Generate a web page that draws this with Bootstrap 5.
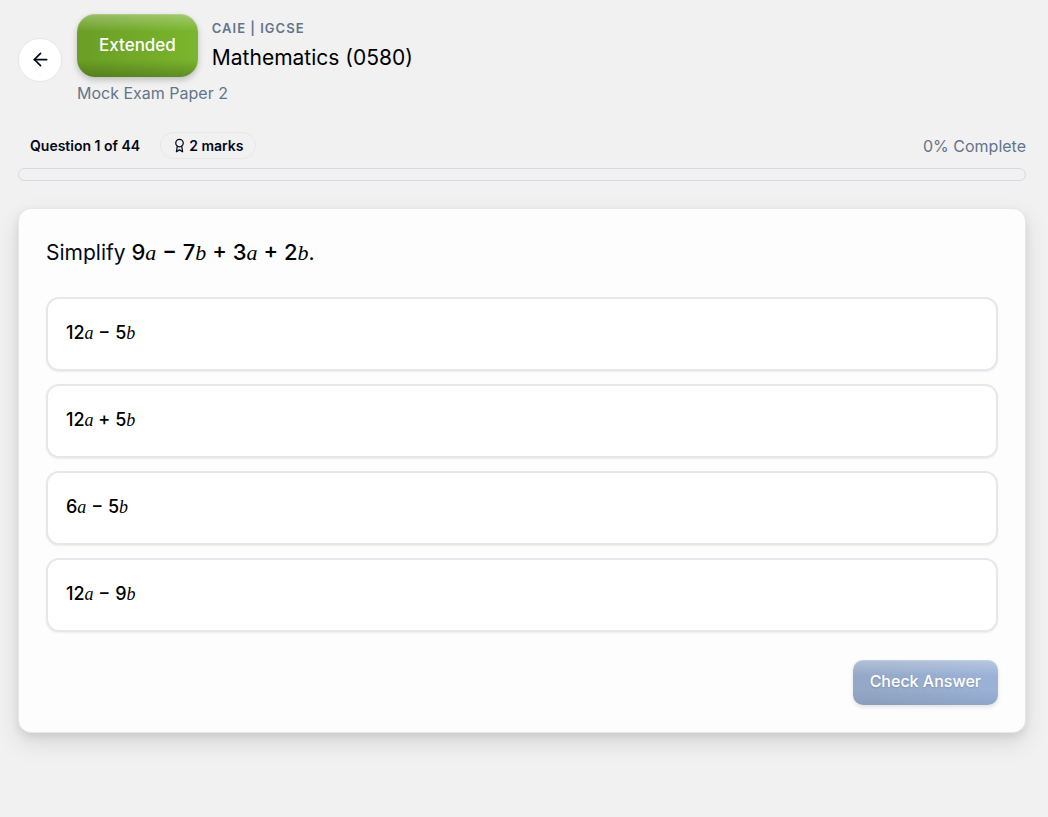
<!DOCTYPE html>
<html lang="en">
<head>
<meta charset="utf-8">
<meta name="viewport" content="width=device-width, initial-scale=1">
<title>Mathematics (0580) – Mock Exam Paper 2</title>
<link href="https://cdn.jsdelivr.net/npm/bootstrap@5.3.0/dist/css/bootstrap.min.css" rel="stylesheet">
<style>
  :root { --ink: #020817; --muted: #64748b; --line: #e5e7eb; }
  body { background: #f1f1f1; color: var(--ink); font-family: Inter, "Open Sans", sans-serif; font-size: 16px; line-height: 24px; }
  .page { padding: 14px 22px 84px 18px; }
  .text-slate { color: var(--muted); }
  .back-btn { width: 44px; height: 44px; margin-right: 15px; padding: 0; background: #fff; border: 1px solid var(--line); color: var(--ink); }
  .tier-btn { padding: 0 22px; height: 63px; border: 0; border-radius: 18px; color: #fff; font-size: 17px; font-weight: 500;
    background: linear-gradient(to bottom, rgba(255,255,255,.3), rgba(255,255,255,0) 28%, rgba(0,0,0,0) 72%, rgba(0,0,0,.22)), linear-gradient(to right, #6a9e24, #7ab62d);
    box-shadow: 0 3px 6px rgba(0,0,0,.22), inset 0 1px 1px rgba(255,255,255,.2); }
  .tier-btn:hover { color: #fff; }
  .heading { padding-left: 14px; }
  .board { font-size: 13px; line-height: 20px; letter-spacing: 1px; font-weight: 600; }
  .subject { margin-top: 4px; font-size: 21px; line-height: 32px; font-weight: 400; color: #000; }
  .status-row { margin-top: 27px; }
  .count { font-size: 14px; font-weight: 600; padding-left: 12px; margin-right: 20px; }
  .marks { height: 27px; padding: 0 11px; gap: 2px; border: 1px solid #e6e7ea; font-size: 14px; font-weight: 600; }
  .exam-progress { height: 13px; margin-top: 9px; background: #f1f1f1; border: 1px solid #d5d8de; border-radius: 7px; }
  .question-card { margin-top: 27px; padding: 27px; background: #fdfdfd; border: 1px solid var(--line); border-radius: 13px;
    box-shadow: 0 10px 24px rgba(0,0,0,.1), 0 4px 8px rgba(0,0,0,.08); }
  .prompt { font-size: 21px; line-height: 32px; font-weight: 400; margin-bottom: 28px; }
  .maths { font-weight: 500; color: #000; }
  .prompt .maths { font-size: 22px; }
  .maths i { font-family: "Liberation Serif", serif; font-weight: 400; }
  .answers { gap: 13px; margin-bottom: 28px; }
  .answer { height: 74px; padding: 0 18px 2px; background: #fff; border: 2px solid var(--line); border-radius: 13px; box-shadow: 0 1px 2px rgba(0,0,0,.07); font-size: 18px; cursor: pointer; }
  .btn-check:checked + .answer { border-color: #4a7cc0; }
  .btn-check:focus-visible + .answer { outline: 2px solid #4a7cc0; }
  .check-btn, .check-btn:disabled { height: 45px; padding: 0 17px 3px; border: 0; border-radius: 10px; color: #fff; opacity: 1; font-size: 16px; font-weight: 500;
    background: linear-gradient(to bottom, rgba(255,255,255,.28), rgba(255,255,255,0) 35%, rgba(0,0,0,0) 65%, rgba(0,0,0,.07)), linear-gradient(to right, #94a8c6, #9bb2d7); text-shadow: 0 1px 2px rgba(0,0,0,.16);
    box-shadow: 0 2px 4px rgba(0,0,0,.12), inset 0 1px 1px rgba(255,255,255,.2); }
</style>
</head>
<body>
<div class="container-fluid page">
  <header class="d-flex align-items-center">
    <button type="button" class="btn back-btn rounded-circle d-flex align-items-center justify-content-center flex-shrink-0" aria-label="Back">
      <svg width="21" height="21" viewBox="0 0 24 24" fill="none" stroke="currentColor" stroke-width="2" stroke-linecap="round" stroke-linejoin="round" aria-hidden="true"><path d="m12 19-7-7 7-7"/><path d="M19 12H5"/></svg>
    </button>
    <div>
      <div class="d-flex align-items-center">
        <button type="button" class="btn tier-btn">Extended</button>
        <div class="heading">
          <div class="board text-slate">CAIE | IGCSE</div>
          <h1 class="subject mb-0">Mathematics (0580)</h1>
        </div>
      </div>
      <div class="text-slate mt-1">Mock Exam Paper 2</div>
    </div>
  </header>

  <div class="status-row d-flex align-items-center justify-content-between">
    <div class="d-flex align-items-center">
      <span class="count">Question 1 of 44</span>
      <span class="marks rounded-pill d-inline-flex align-items-center">
        <svg width="15" height="15" viewBox="0 0 24 24" fill="none" stroke="currentColor" stroke-width="2" stroke-linecap="round" stroke-linejoin="round" aria-hidden="true"><circle cx="12" cy="8" r="6"/><path d="M15.477 12.890 17 22l-5-3-5 3 1.523-9.110"/></svg>
        2 marks
      </span>
    </div>
    <span class="text-slate">0% Complete</span>
  </div>
  <div class="progress exam-progress" role="progressbar" aria-label="Exam progress" aria-valuenow="0" aria-valuemin="0" aria-valuemax="100"><div class="progress-bar" style="width: 0%"></div></div>

  <main class="question-card">
    <h2 class="prompt" id="prompt">Simplify <span class="maths">9<i>a</i> − 7<i>b</i> + 3<i>a</i> + 2<i>b</i></span>.</h2>
    <div class="answers d-flex flex-column" role="radiogroup" aria-labelledby="prompt">
      <div><input class="btn-check" type="radio" name="answer" id="a1"><label class="answer maths d-flex align-items-center" for="a1"><span>12<i>a</i> − 5<i>b</i></span></label></div>
      <div><input class="btn-check" type="radio" name="answer" id="a2"><label class="answer maths d-flex align-items-center" for="a2"><span>12<i>a</i> + 5<i>b</i></span></label></div>
      <div><input class="btn-check" type="radio" name="answer" id="a3"><label class="answer maths d-flex align-items-center" for="a3"><span>6<i>a</i> − 5<i>b</i></span></label></div>
      <div><input class="btn-check" type="radio" name="answer" id="a4"><label class="answer maths d-flex align-items-center" for="a4"><span>12<i>a</i> − 9<i>b</i></span></label></div>
    </div>
    <div class="d-flex justify-content-end">
      <button type="button" class="btn check-btn" disabled>Check Answer</button>
    </div>
  </main>
</div>
<script src="https://cdn.jsdelivr.net/npm/bootstrap@5.3.0/dist/js/bootstrap.bundle.min.js"></script>
</body>
</html>
